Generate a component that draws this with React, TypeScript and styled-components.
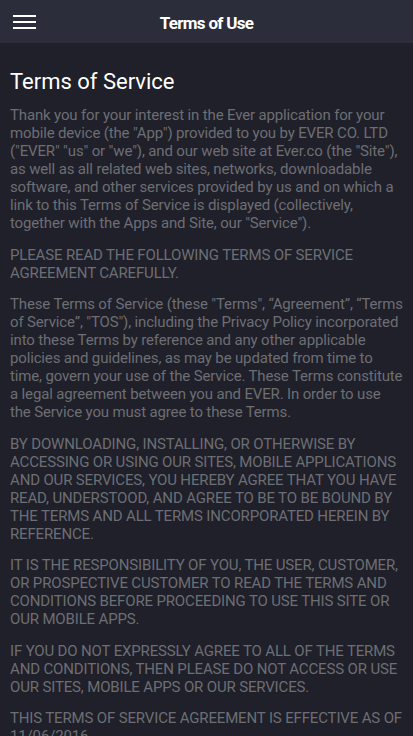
import { FC } from 'react';
import styled, { createGlobalStyle } from 'styled-components';

const GlobalStyle = createGlobalStyle`
  html, body {
    margin: 0;
    padding: 0;
    background: #1f2029;
  }
  body {
    font-family: Roboto, "Noto Sans", sans-serif;
  }
`;

const Page = styled.div`
  width: 413px;
  height: 736px;
  display: flex;
  flex-direction: column;
  overflow: hidden;
  background: #1f2029;
`;

const Toolbar = styled.header`
  height: 43px;
  flex-shrink: 0;
  background: #2b2d3a;
  display: flex;
  align-items: center;
  position: relative;
`;

const MenuButton = styled.button`
  width: 48px;
  height: 43px;
  padding: 0 0 0 13px;
  border: 0;
  background: none;
  display: flex;
  align-items: center;
  cursor: pointer;
`;

const Title = styled.h1`
  position: absolute;
  left: 0;
  right: 0;
  margin: 0;
  padding-top: 2px;
  text-align: center;
  color: #ffffff;
  font-size: 17px;
  font-weight: 700;
  letter-spacing: -0.7px;
  pointer-events: none;
`;

const Content = styled.main`
  flex: 1;
  overflow: hidden;
  padding: 0 10px;
`;

const Heading = styled.h2`
  margin: 25px 0 10px;
  color: #ffffff;
  font-size: 22px;
  font-weight: 400;
  line-height: 28px;
`;

const Paragraph = styled.p`
  margin: 0 0 13.5px;
  color: #6d6e74;
  font-size: 15px;
  line-height: 18px;
  letter-spacing: -0.15px;
`;

const HamburgerIcon: FC = () => (
  <svg width="24" height="16" viewBox="0 0 24 16">
    <rect x="0" y="1" width="23" height="2" fill="#fff" />
    <rect x="0" y="7" width="23" height="2" fill="#fff" />
    <rect x="0" y="13" width="23" height="2" fill="#fff" />
  </svg>
);

const paragraphs = [
  'Thank you for your interest in the Ever application for your mobile device (the "App") provided to you by EVER CO. LTD ("EVER" "us" or "we"), and our web site at Ever.co (the "Site"), as well as all related web sites, networks, downloadable software, and other services provided by us and on which a link to this Terms of Service is displayed (collectively, together with the Apps and Site, our "Service").',
  'PLEASE READ THE FOLLOWING TERMS OF SERVICE AGREEMENT CAREFULLY.',
  'These Terms of Service (these "Terms", \u201cAgreement\u201d, \u201cTerms of Service\u201d, "TOS"), including the Privacy Policy incorporated into these Terms by reference and any other applicable policies and guidelines, as may be updated from time to time, govern your use of the Service. These Terms constitute a legal agreement between you and EVER. In order to use the Service you must agree to these Terms.',
  'BY DOWNLOADING, INSTALLING, OR OTHERWISE BY ACCESSING OR USING OUR SITES, MOBILE APPLICATIONS AND OUR SERVICES, YOU HEREBY AGREE THAT YOU HAVE READ, UNDERSTOOD, AND AGREE TO BE TO BE BOUND BY THE TERMS AND ALL TERMS INCORPORATED HEREIN BY REFERENCE.',
  'IT IS THE RESPONSIBILITY OF YOU, THE USER, CUSTOMER, OR PROSPECTIVE CUSTOMER TO READ THE TERMS AND CONDITIONS BEFORE PROCEEDING TO USE THIS SITE OR OUR MOBILE APPS.',
  'IF YOU DO NOT EXPRESSLY AGREE TO ALL OF THE TERMS AND CONDITIONS, THEN PLEASE DO NOT ACCESS OR USE OUR SITES, MOBILE APPS OR OUR SERVICES.',
  'THIS TERMS OF SERVICE AGREEMENT IS EFFECTIVE AS OF 11/06/2016.',
];

const App: FC = () => (
  <Page>
    <GlobalStyle />
    <Toolbar>
      <MenuButton aria-label="Menu">
        <HamburgerIcon />
      </MenuButton>
      <Title>Terms of Use</Title>
    </Toolbar>
    <Content>
      <Heading>Terms of Service</Heading>
      {paragraphs.map((text, i) => (
        <Paragraph key={i}>{text}</Paragraph>
      ))}
    </Content>
  </Page>
);

export default App;
